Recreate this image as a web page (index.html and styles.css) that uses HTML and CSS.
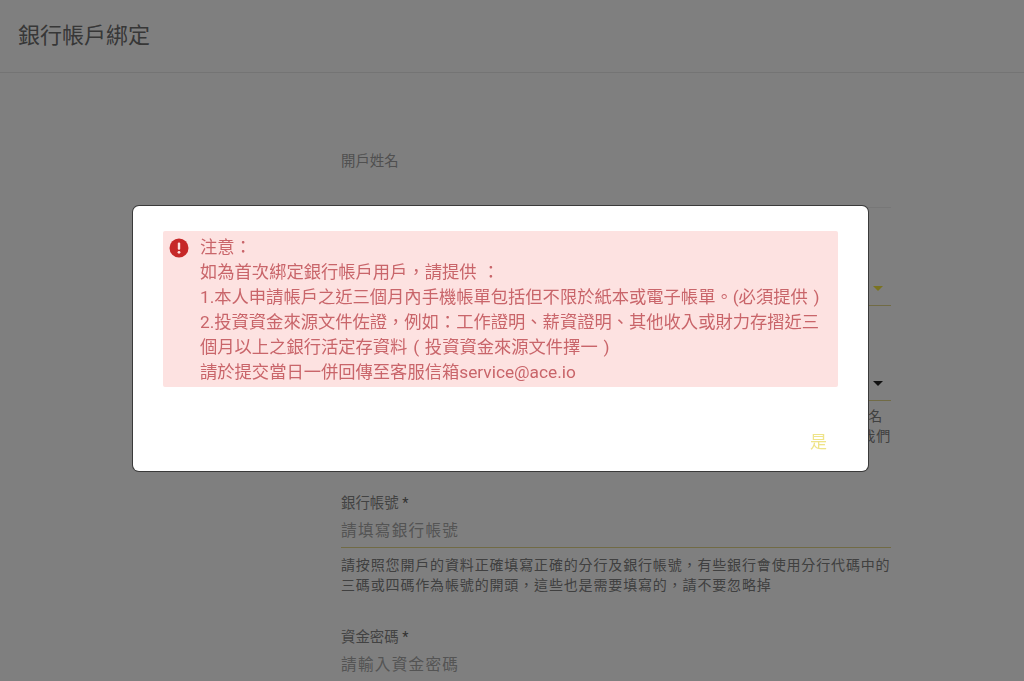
FILE: index.html
```html
<!DOCTYPE html>
<html lang="zh-Hant">

<head>
  <meta charset="UTF-8">
  <meta name="viewport" content="width=device-width, initial-scale=1.0">
  <title>銀行帳戶綁定</title>
  <link rel="stylesheet" href="styles.css">
</head>

<body>

  <header class="page-header">
    <h1>銀行帳戶綁定</h1>
  </header>

  <form class="bank-form">
    <div class="field field-name">
      <label class="label-faint">開戶姓名</label>
      <div class="field-input field-plain"></div>
    </div>

    <div class="field field-bank">
      <label>銀行名稱 <span class="required">*</span></label>
      <div class="field-input">
        <span class="placeholder">請選擇銀行</span>
        <span class="arrow arrow-yellow"></span>
      </div>
    </div>

    <div class="field field-branch">
      <label>分行名稱 <span class="required">*</span></label>
      <div class="field-input">
        <span class="placeholder">請選擇分行</span>
        <span class="arrow"></span>
      </div>
      <p class="help help-right">請選擇您開戶的分行名&ensp;<br>如找不到分行請聯繫我們</p>
    </div>

    <div class="field field-account">
      <label>銀行帳號 <span class="required">*</span></label>
      <div class="field-input">
        <span class="placeholder">請填寫銀行帳號</span>
      </div>
      <p class="help">請按照您開戶的資料正確填寫正確的分行及銀行帳號&#xFF0C;有些銀行會使用分行代碼中的三碼或四碼作為帳號的開頭&#xFF0C;這些也是需要填寫的&#xFF0C;請不要忽略掉</p>
    </div>

    <div class="field">
      <label>資金密碼 <span class="required">*</span></label>
      <div class="field-input">
        <span class="placeholder">請輸入資金密碼</span>
      </div>
    </div>
  </form>

  <div class="overlay">
    <div class="modal">
      <div class="alert">
        <svg class="alert-icon" viewBox="0 0 20 20" width="20" height="20">
          <circle cx="10" cy="10" r="9.5" fill="#c62828" />
          <rect x="8.8" y="4.4" width="2.4" height="7.4" rx="1.1" fill="#fde2e1" />
          <circle cx="10" cy="14.3" r="1.4" fill="#fde2e1" />
        </svg>
        <div class="alert-text">
          注意&#xFF1A;<br>
          如為首次綁定銀行帳戶用戶&#xFF0C;請提供 &#xFF1A;<br>
          1.本人申請帳戶之近三個月內手機帳單包括但不限於紙本或電子帳單。(必須提供 )<br>
          2.投資資金來源文件佐證&#xFF0C;例如&#xFF1A;工作證明、薪資證明、其他收入或財力存摺近三個月以上之銀行活定存資料 ( 投資資金來源文件擇一 )<br>
          請於提交當日一併回傳至客服信箱service@ace.io
        </div>
      </div>
      <div class="modal-actions">
        <button class="confirm" type="button">是</button>
      </div>
    </div>
  </div>

</body>

</html>
```

FILE: styles.css
```css
html,
body {
  height: 100%;
  overflow: hidden;
}

body {
  margin: 0;
  background-color: #fff;
  font-family: Roboto, "Noto Sans CJK TC", sans-serif;
  color: #666;
}

.page-header {
  height: 72px;
  padding-left: 18px;
  border-bottom: 1px solid #e8e8e8;
  display: flex;
  align-items: center;
}

.page-header h1 {
  margin: 0 0 6px;
  font-size: 22px;
  font-weight: 400;
  color: #6e6e6e;
}

.bank-form {
  width: 550px;
  margin-left: 341px;
  padding-top: 78px;
}

.field {
  margin-bottom: 32px;
}

.field-name {
  margin-bottom: 43px;
}

.field-bank {
  margin-bottom: 40px;
}

.field-branch {
  margin-bottom: 47px;
}

.field label {
  display: block;
  height: 20px;
  font-size: 14.4px;
  line-height: 22px;
  color: #858585;
}

.field .label-faint {
  color: #a0a0a0;
}

.required {
  color: #666;
}

.field-input {
  height: 34px;
  border-bottom: 1px solid #e2d68a;
  display: flex;
  align-items: center;
  justify-content: space-between;
}

.field-plain {
  height: 36px;
  border-bottom-color: #eee;
}

.placeholder {
  margin-bottom: 2px;
  font-size: 15.6px;
  letter-spacing: 1.3px;
  color: #a8a8a8;
}

.arrow {
  width: 0;
  height: 0;
  margin-right: 8px;
  border-left: 5px solid transparent;
  border-right: 5px solid transparent;
  border-top: 5px solid #222;
}

.arrow-yellow {
  border-top-color: #f5e642;
}

.help {
  margin: 7px 0 0;
  font-size: 14px;
  letter-spacing: 0.85px;
  line-height: 20px;
  color: #808080;
}

.help-right {
  margin-top: 5px;
  text-align: right;
}

.overlay {
  position: fixed;
  top: 0;
  right: 0;
  bottom: 0;
  left: 0;
  background-color: rgba(0, 0, 0, 0.5);
  padding: 206px 156px 0 133px;
}

.modal {
  height: 265px;
  background-color: #fff;
  border-radius: 6px;
  box-shadow: 0 0 0 1px #3a3a3a;
  padding: 25px 30px 0;
  box-sizing: border-box;
}

.alert {
  height: 156px;
  background-color: #fde2e1;
  border-radius: 2px;
  display: flex;
  gap: 11px;
  padding: 4px 6px 0;
  box-sizing: border-box;
}

.alert-icon {
  flex: none;
  margin-top: 3px;
}

.alert-text {
  font-size: 17.3px;
  line-height: 25px;
  word-spacing: 1.5px;
  color: #c9656a;
}

.modal-actions {
  display: flex;
  justify-content: flex-end;
  margin-top: 43px;
  padding-right: 11px;
}

.confirm {
  background: none;
  border: none;
  padding: 0;
  font-family: inherit;
  font-size: 17px;
  line-height: 24px;
  color: #efe48a;
  cursor: pointer;
}
```
